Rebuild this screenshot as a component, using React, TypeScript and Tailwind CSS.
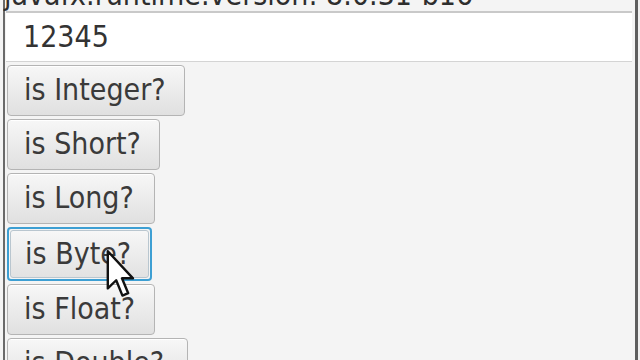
import React from 'react';

// Zoomed-in JavaFX test window: version label, a text field and a column of
// "is X?" check buttons. Text is stretched vertically in the capture, so
// glyphs get a small scale-y.

const font = { fontFamily: '"DejaVu Sans", "Liberation Sans", sans-serif' };

type Btn = { label: string; width: string; focused?: boolean };

const buttons: Btn[] = [
  { label: 'is Integer?', width: 'w-[178px]' },
  { label: 'is Short?', width: 'w-[153px]' },
  { label: 'is Long?', width: 'w-[148px]' },
  { label: 'is Byte?', width: 'w-[145px]', focused: true },
  { label: 'is Float?', width: 'w-[148px]' },
  { label: 'is Double?', width: 'w-[181px]' },
];

function Stretched({ children }: { children: React.ReactNode }) {
  return <span className="inline-block origin-center scale-y-[1.12]">{children}</span>;
}

function CheckButton({ label, width, focused }: Btn) {
  if (focused) {
    return (
      <div className={`${width} h-[54px] shrink-0 rounded-[4px] border-2 border-[#3d9fd3] p-px`}>
        <div className="flex h-full items-center rounded-[3px] border border-[#b9c6cf] bg-gradient-to-b from-[#f7f7f7] to-[#e2e2e2] pl-[14px] text-[27px] text-[#3a3a3a]">
          <Stretched>{label}</Stretched>
        </div>
      </div>
    );
  }
  return (
    <div
      className={`${width} flex h-[51px] shrink-0 items-center rounded-[4px] border border-[#b4b4b4] bg-gradient-to-b from-[#f7f7f7] to-[#e0e0e0] pl-[16px] text-[27px] text-[#3a3a3a] shadow-[inset_0_1px_0_#ffffff]`}
    >
      <Stretched>{label}</Stretched>
    </div>
  );
}

function Cursor() {
  return (
    <svg
      className="absolute left-[106px] top-[250px]"
      width="30"
      height="48"
      viewBox="0 0 12 20"
    >
      <path
        d="M0.5 0.5 L0.5 16 L4 12.6 L6.6 19 L9 18 L6.4 11.8 L11 11.8 Z"
        fill="#ffffff"
        stroke="#111111"
        strokeWidth="1"
        strokeLinejoin="round"
      />
    </svg>
  );
}

export default function App() {
  return (
    <div className="relative flex h-[360px] w-[640px] overflow-hidden bg-[#f4f4f4]" style={font}>
      <div className="w-[3px] shrink-0 bg-[#f4f4f4]" />
      <div className="w-[2px] shrink-0 bg-[#6a6a6a]" />
      <div className="flex min-w-0 flex-1 flex-col">
        <div className="-mt-[20px] h-[31px] shrink-0 -ml-[1px] whitespace-nowrap text-[27px] leading-[30px] text-[#2e2e2e]">
          <Stretched>javafx.runtime.version: 8.0.31-b16</Stretched>
        </div>
        <div className="mr-[3px] ml-[1px] flex h-[51px] shrink-0 items-center border-t-2 border-b border-t-[#c9c9c9] border-b-[#d4d4d4] bg-white pl-[17px] text-[27px] text-[#333333]">
          <Stretched>12345</Stretched>
        </div>
        <div className="mt-[3px] ml-[2px] flex flex-col gap-[3px]">
          {buttons.map((b) => (
            <CheckButton key={b.label} {...b} />
          ))}
        </div>
      </div>
      <div className="w-[3px] shrink-0 bg-[#5e5e5e]" />
      <div className="w-[2px] shrink-0 bg-[#f0f0f0]" />
      <Cursor />
    </div>
  );
}
